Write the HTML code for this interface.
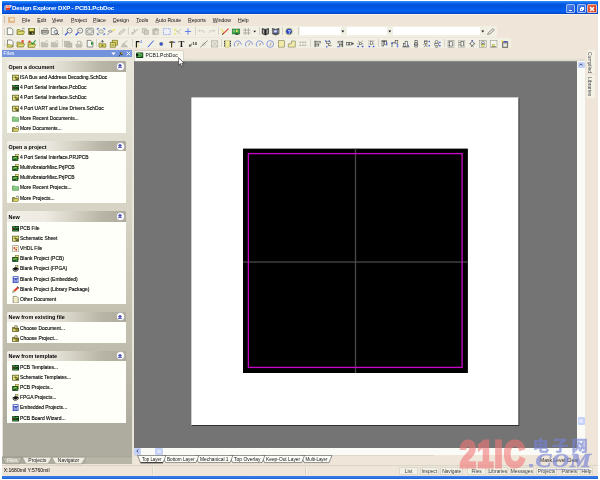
<!DOCTYPE html>
<html><head><meta charset="utf-8"><title>Design Explorer DXP - PCB1.PcbDoc</title>
<style>
*{box-sizing:border-box}
html,body{margin:0;padding:0}
body{width:600px;height:480px;background:#fff;overflow:hidden;position:relative;font-family:"Liberation Sans",sans-serif;font-size:5.1px;color:#000;line-height:1}
.a{position:absolute}
.t{position:absolute;white-space:nowrap;line-height:6px;height:6px}
#root{position:absolute;left:0;top:0;width:600px;height:480px;will-change:transform}
#win{left:2px;top:1px;width:596px;height:478px;background:#efe5d9}
#title{left:2px;top:1px;width:596px;height:13px;background:linear-gradient(#3a90fa 0,#1c7af4 9%,#0862ea 18%,#0052da 30%,#0056e2 48%,#0460ee 72%,#0458e6 88%,#0642c6 97%,#0a3ab4 100%)}
#title .t{color:#fff;font-weight:bold;font-size:6.15px;left:10px;top:3.7px;letter-spacing:-0.17px}
#menu{left:2px;top:14px;width:596px;height:11.5px;background:#efe5d9}
#menu .t{top:3.3px;font-size:5.1px;color:#111}
#menu u{text-decoration-color:rgba(0,0,0,0.32);text-underline-offset:0.3px}
.tb{background:#f2f0e4;border-radius:1px}
.sep{width:1px;background:#d6d2c5}
#panel{left:2px;top:57px;width:130px;height:407px;background:linear-gradient(#e9e6da,#dfddd0 20%,#d6d3c4 39%,#c6c2b2 62%,#bfbcad 72%,#aeac9e 90%,#aeac9e)}
#phead{left:2px;top:50px;width:130px;height:7.3px;background:#7292dc}
.sec{left:7px;width:119.3px;background:#fffffa}
.sh{left:7px;width:119.3px;height:10.5px;border-radius:1.5px 1.5px 0 0;background:linear-gradient(90deg,#f0eee6,#edebe2 32%,#d4d1c4 56%,#b8b5a6 80%,#aeab9c)}
.sh .t{left:1.5px;top:2.7px;font-weight:bold;font-size:5.45px;color:#000}
.chev{left:109.9px;top:1.7px;width:7px;height:7px;border-radius:50%;background:#fff;box-shadow:0 0 0 0.4px #c4c4d4}
.it{left:20px;font-size:4.94px;color:#000;-webkit-text-stroke:0.12px #000}
#canvas{left:134px;top:61px;width:443px;height:386.5px;background:#747474}
#sheet{left:191px;top:97px;width:327.5px;height:328px;background:#fff;box-shadow:0.8px 0.8px 0 #2a2a2a}
#board{left:243px;top:148px;width:225px;height:225px;background:#000}
#mag{left:248px;top:153px;width:215px;height:215px;border:1px solid #b414b4}
.sb{background:#c4d2fa;border-radius:1px}
.btn{top:467px;height:8px;background:#f3f1e6;border:0.5px solid #dcd8ca;text-align:center;font-size:4.85px;line-height:7px;color:#3a3a3a;white-space:nowrap}
.vt{position:absolute;left:587px;width:7.5px;background:#f4f2e6;border-radius:0 1px 1px 0}
.vt span{position:absolute;left:6.3px;top:1.5px;transform-origin:0 0;transform:rotate(90deg);white-space:nowrap;font-size:5px;line-height:6px;color:#4a4a4a}
.lt{position:absolute;top:456.5px;font-size:5px;line-height:6px;white-space:nowrap;color:#111}
</style></head>
<body>
<div id="root">
<div class="a" id="win"></div>
<div class="a" id="title"><span class="t">Design Explorer DXP - PCB1.PcbDoc</span>
<div class="a" style="left:2px;top:4px;width:2.2px;height:5.5px;background:#8a9fd0;border-radius:2px 0 0 2px"></div>
<div class="a" style="left:3.6px;top:3.7px;width:4.6px;height:5.8px;background:#e83a20"><span class="t" style="left:0.4px;top:0.6px;font-size:3px;line-height:4px;height:4px;color:#fff;font-weight:bold;letter-spacing:-0.2px">DXP</span></div>
<div class="a" style="left:564.3px;top:2.5px;width:8.8px;height:9.6px;border-radius:1.5px;border:0.6px solid rgba(255,255,255,0.55);background:linear-gradient(135deg,#4f88ee,#2558d4)"><div class="a" style="left:2px;top:5.3px;width:3px;height:1.4px;background:#fff"></div></div>
<div class="a" style="left:574.8px;top:2.5px;width:9px;height:9.6px;border-radius:1.5px;border:0.6px solid rgba(255,255,255,0.55);background:linear-gradient(135deg,#4f88ee,#2558d4)"><div class="a" style="left:3px;top:2px;width:3.6px;height:3.4px;border:0.7px solid #fff;border-top-width:1.1px"></div><div class="a" style="left:1.8px;top:3.6px;width:3.4px;height:3.2px;border:0.7px solid #fff;border-top-width:1.1px;background:#3a6fe0"></div></div>
<div class="a" style="left:585.4px;top:2.5px;width:9.4px;height:9.6px;border-radius:1.5px;border:0.6px solid rgba(255,255,255,0.6);background:linear-gradient(135deg,#e8684a,#cc3010)"><svg class="a" style="left:0;top:0" width="8.2" height="8.2" viewBox="0 0 8.2 8.2"><path d="M2.1 2.1L6.1 6.1M6.1 2.1L2.1 6.1" stroke="#fff" stroke-width="1.5"/></svg></div>
</div>
<div class="a" id="menu">
<div class="a" style="left:0;top:-0.3px;width:596px;height:0.8px;background:#fbf4e2"></div>
<div class="a" style="left:1.6px;top:2.3px;width:1px;height:7px;background:#c3bfb2"></div>
<div class="a" style="left:6.3px;top:2.5px;width:6.6px;height:6.2px;background:#e2b98a;border-radius:1px"><div class="a" style="left:1.3px;top:1.3px;width:4px;height:3.6px;background:#f1e2c6;border-radius:1px"></div></div>
<span class="t" style="left:20px"><u>F</u>ile</span>
<span class="t" style="left:35.3px"><u>E</u>dit</span>
<span class="t" style="left:50px"><u>V</u>iew</span>
<span class="t" style="left:69px"><u>P</u>roject</span>
<span class="t" style="left:91px"><u>P</u>lace</span>
<span class="t" style="left:111px"><u>D</u>esign</span>
<span class="t" style="left:134.3px"><u>T</u>ools</span>
<span class="t" style="left:153.5px"><u>A</u>uto Route</span>
<span class="t" style="left:186px"><u>R</u>eports</span>
<span class="t" style="left:210.7px"><u>W</u>indow</span>
<span class="t" style="left:236px"><u>H</u>elp</span>
</div>
<div class="a tb" style="left:2.5px;top:26px;width:494.5px;height:10.5px"></div>
<div class="a tb" style="left:2.5px;top:37.7px;width:508px;height:10.6px"></div>
<div class="a" style="left:3.5px;top:27.5px;width:1px;height:7.5px;background:#d6d2c4"></div>
<div class="a" style="left:3.5px;top:39.5px;width:1px;height:7.5px;background:#d6d2c4"></div>
<div class="a sep" style="left:38.5px;top:27.3px;height:8px"></div>
<div class="a sep" style="left:61.5px;top:27.3px;height:8px"></div>
<div class="a sep" style="left:128.2px;top:27.3px;height:8px"></div>
<div class="a sep" style="left:194.8px;top:27.3px;height:8px"></div>
<div class="a sep" style="left:218.0px;top:27.3px;height:8px"></div>
<div class="a sep" style="left:258.9px;top:27.3px;height:8px"></div>
<div class="a sep" style="left:282.2px;top:27.3px;height:8px"></div>
<div class="a sep" style="left:297.5px;top:27.3px;height:8px"></div>
<div class="a sep" style="left:38.5px;top:39.3px;height:8px"></div>
<div class="a sep" style="left:61.5px;top:39.3px;height:8px"></div>
<div class="a sep" style="left:95.5px;top:39.3px;height:8px"></div>
<div class="a sep" style="left:132.0px;top:39.3px;height:8px"></div>
<div class="a sep" style="left:220.5px;top:39.3px;height:8px"></div>
<div class="a sep" style="left:310.1px;top:39.3px;height:8px"></div>
<div class="a sep" style="left:377.5px;top:39.3px;height:8px"></div>
<div class="a sep" style="left:443.9px;top:39.3px;height:8px"></div>
<div class="a" style="left:300px;top:27.3px;width:40.800000000000026px;height:7.8px;background:#fff"></div>
<div class="a" style="left:340.8px;top:27.3px;width:4.8px;height:7.8px;background:#f1eee2"></div>
<svg class="a" style="left:341.40000000000003px;top:29.8px" width="3.6" height="3" viewBox="0 0 3.6 3"><path d="M0.3 0.5H3.3L1.8 2.4Z" fill="#111"/></svg>
<div class="a" style="left:347px;top:27.3px;width:40.2px;height:7.8px;background:#fff"></div>
<div class="a" style="left:387.2px;top:27.3px;width:4.8px;height:7.8px;background:#f1eee2"></div>
<svg class="a" style="left:387.8px;top:29.8px" width="3.6" height="3" viewBox="0 0 3.6 3"><path d="M0.3 0.5H3.3L1.8 2.4Z" fill="#111"/></svg>
<div class="a" style="left:393px;top:27.3px;width:87.2px;height:7.8px;background:#fff"></div>
<div class="a" style="left:480.2px;top:27.3px;width:4.8px;height:7.8px;background:#f1eee2"></div>
<svg class="a" style="left:480.8px;top:29.8px" width="3.6" height="3" viewBox="0 0 3.6 3"><path d="M0.3 0.5H3.3L1.8 2.4Z" fill="#111"/></svg>
<svg class="a" style="left:0;top:0" width="600" height="52" viewBox="0 0 600 52"><path d="M7.3 28H11.1L12.899999999999999 29.8V34.6H7.3Z" fill="#fdfdf8" stroke="#444" stroke-width="0.6" /><path d="M17 29.6H19.6L20.3 30.4H23.4V34.4H17Z" fill="#d6cf63" stroke="#6f6d1e" stroke-width="0.6" /><path d="M18.2 31.6H24.8L23.4 34.4H17Z" fill="#e4de7c" stroke="#6f6d1e" stroke-width="0.5" /><path d="M22 28.8q1.6 -1.2 2.8 0.4" fill="none" stroke="#333" stroke-width="0.5" /><rect x="28.3" y="28" width="6.6" height="6.6" fill="#55551a" /><rect x="29.4" y="28.5" width="4.4" height="2.6" fill="#e6e070" /><rect x="29.8" y="32.1" width="3.4" height="2.5" fill="#2c2c10" /><rect x="31.8" y="32.6" width="1" height="1.6" fill="#d8d8c0" /><path d="M42.5 30.4L44 28.4H47.8L46.6 30.4Z" fill="#f2f2ea" stroke="#666" stroke-width="0.5" /><rect x="41.3" y="30.4" width="7.2" height="3" fill="#a9a79c" stroke="#555" stroke-width="0.5"/><rect x="42.4" y="33" width="5" height="1.4" fill="#dcdad0" stroke="#666" stroke-width="0.4"/><path d="M51.3 28H55.099999999999994L56.9 29.8V34.6H51.3Z" fill="#fdfdf8" stroke="#444" stroke-width="0.6" /><circle cx="55.8" cy="32" r="1.7" fill="#dfe8f8" stroke="#445" stroke-width="0.6"/><path d="M57 33.2L58.8 35" fill="none" stroke="#333" stroke-width="0.9" /><circle cx="69.60000000000001" cy="30.6" r="2.5" fill="#fbfbf6" stroke="#555" stroke-width="0.7"/><path d="M67.80000000000001 32.4L65.0 35.2" fill="none" stroke="#3554d8" stroke-width="1.3" /><path d="M68.60000000000001 30.6H70.60000000000001" fill="none" stroke="#666" stroke-width="0.5" /><circle cx="80.2" cy="30.6" r="2.5" fill="#fbfbf6" stroke="#555" stroke-width="0.7"/><path d="M78.4 32.4L75.6 35.2" fill="none" stroke="#3554d8" stroke-width="1.3" /><path d="M79.2 30.6H81.2" fill="none" stroke="#666" stroke-width="0.5" /><rect x="86" y="28.2" width="7.4" height="6.6" fill="#f6f6f0" stroke="#555" stroke-width="0.6" rx="1"/><path d="M87.2 30.2q2.5 -1.6 5 0v2.6q-2.5 1.4 -5 0Z" fill="#e6e6de" stroke="#666" stroke-width="0.5" /><path d="M97.3 30V28.4H99M103 28.4H104.7V30M104.7 33V34.6H103M99 34.6H97.3V33" fill="none" stroke="#3554d8" stroke-width="0.7" /><rect x="99" y="30" width="4" height="3" fill="#e8e8e0" stroke="#777" stroke-width="0.5"/><path d="M108 31.4q2.4 -2 4.4 0q-2 2.2 -4.4 0Z" fill="#e2e2da" stroke="#666" stroke-width="0.5" /><rect x="112.6" y="29" width="2.4" height="2" fill="#ece66c" /><path d="M108.6 33.4L107.6 34.8" fill="none" stroke="#555" stroke-width="0.7" /><path d="M118.4 34.4L119.4 32.6L123.8 28.6L125.4 30L121 34Z" fill="#dddbd0" stroke="#b3b0a4" stroke-width="0.6" /><path d="M131.6 33.6L138.2 29.2M134 29L135.2 32.6" fill="none" stroke="#b3b0a4" stroke-width="0.8" /><circle cx="132.6" cy="33.4" r="1" fill="none" stroke="#b3b0a4" stroke-width="0.6"/><rect x="142.2" y="28.6" width="4" height="4.4" fill="#d9d6ca" stroke="#b3b0a4" stroke-width="0.6"/><rect x="144.4" y="30.2" width="4.2" height="4.4" fill="#d0cdc1" stroke="#b3b0a4" stroke-width="0.6"/><rect x="152.8" y="29" width="5.8" height="5.6" fill="#c4c1b5" stroke="#b3b0a4" stroke-width="0.6"/><rect x="154.4" y="28.2" width="2.6" height="1.6" fill="#b3b0a4" /><rect x="155" y="31" width="3.4" height="3.4" fill="#dddace" /><rect x="163.4" y="28.6" width="6.8" height="6" fill="#f0f1f8" stroke="#5872e0" stroke-width="0.6" stroke-dasharray="1.4 0.9"/><path d="M174.4 29.4L180.6 34.2M180.6 29.4L177.6 31.8" fill="none" stroke="#8a887c" stroke-width="0.7" stroke-dasharray="1.2 0.7"/><rect x="174.2" y="28.8" width="2.2" height="1.8" fill="#ece66c" /><rect x="174.4" y="33" width="1.8" height="1.6" fill="#ece66c" /><path d="M188 28.4V34.6M184.9 31.5H191.1" fill="none" stroke="#4668e6" stroke-width="0.8" /><path d="M198.6 30.8H203q1.6 0.2 1.4 2.2M198.6 30.8L199.8 29.7M198.6 30.8L199.8 31.9" fill="none" stroke="#c2bfb3" stroke-width="0.7" /><path d="M215 30.8H210.6q-1.6 0.2 -1.4 2.2M215 30.8L213.8 29.7M215 30.8L213.8 31.9" fill="none" stroke="#c2bfb3" stroke-width="0.7" /><path d="M221.4 28.6L224.2 33.6" fill="none" stroke="#e8e060" stroke-width="1.2" /><path d="M222.4 34.4L228.6 28.6" fill="none" stroke="#d8442c" stroke-width="1.2" /><path d="M222.2 34.8L223.4 33.4" fill="none" stroke="#333" stroke-width="0.8" /><rect x="232.2" y="29" width="7.6" height="5" fill="#3aa64a" stroke="#2a6a2c" stroke-width="0.5"/><rect x="236" y="29.8" width="1.6" height="2.2" fill="#e6e46c" /><rect x="233" y="30.2" width="2" height="1.4" fill="#8fd08a" /><rect x="235.4" y="33.4" width="3" height="1.4" fill="#333" /><path d="M245.2 28V35M248.4 28V35M243 30.2H250.6M243 33H250.6" fill="none" stroke="#98968c" stroke-width="0.7" /><path d="M253.4 30.8H256L254.7 32.4Z" fill="#111" /><path d="M262.2 28.4L265.4 29.4L268.6 28.4V33.8L265.4 35L262.2 33.8Z" fill="#4a4a4a" stroke="#222" stroke-width="0.6" /><path d="M263.6 29.8V33.6M267.2 29.8V33.6" fill="none" stroke="#d8d8d0" stroke-width="0.8" /><path d="M265.4 29.4V35" fill="none" stroke="#111" stroke-width="0.8" /><path d="M272.4 28.4L275.6 29.4L279 28.4V33.8L275.6 35L272.4 33.8Z" fill="#55555a" stroke="#222" stroke-width="0.6" /><rect x="274" y="30" width="3" height="2.8" fill="#e8ecfa" stroke="#3554d8" stroke-width="0.5"/><path d="M273 29.6V33.4M278.2 29.6V33.4" fill="none" stroke="#c8c8c4" stroke-width="0.6" /><circle cx="289" cy="31.5" r="3.4" fill="#2244c8" stroke="#e8d868" stroke-width="0.8"/><text x="287.7" y="33.5" font-size="5" font-weight="bold" fill="#fff" font-family="Liberation Sans, sans-serif">?</text><path d="M487.4 34.4L488.4 32.6L492.8 28.6L494.4 30L490 34Z" fill="#e2e0d6" stroke="#77756c" stroke-width="0.7" /><path d="M7.5 40.0H11.3L13.1 41.8V46.6H7.5Z" fill="#fdfdf8" stroke="#444" stroke-width="0.6" /><path d="M7 44.400000000000006H9.4L10 45.0H12.6V47.2H7Z" fill="#d6cf63" stroke="#6f6d1e" stroke-width="0.5" /><path d="M17 42.00000000000001H19.6L20.3 42.800000000000004H23.4V46.800000000000004H17Z" fill="#d6cf63" stroke="#6f6d1e" stroke-width="0.6" /><path d="M18.2 44.00000000000001H24.8L23.4 46.800000000000004H17Z" fill="#e4de7c" stroke="#6f6d1e" stroke-width="0.5" /><circle cx="22.6" cy="41.400000000000006" r="1.3" fill="#e8503c"/><path d="M28 42.400000000000006H30.6L31.3 43.2H34.4V47.2H28Z" fill="#d6cf63" stroke="#6f6d1e" stroke-width="0.6" /><path d="M29.2 44.400000000000006H35.8L34.4 47.2H28Z" fill="#e4de7c" stroke="#6f6d1e" stroke-width="0.5" /><circle cx="29.6" cy="41.6" r="1.2" fill="#e8503c"/><path d="M31 42.400000000000006L32.6 44.0L35.6 40.400000000000006" fill="none" stroke="#2f9a3a" stroke-width="1.1" /><path d="M41.3 42.400000000000006H43.9L44.599999999999994 43.2H47.699999999999996V47.0H41.3Z" fill="#c3c0b4" stroke="#b3b0a4" stroke-width="0.6" /><path d="M44.699999999999996 42.400000000000006L46.699999999999996 40.6L48.3 41.800000000000004" fill="none" stroke="#b3b0a4" stroke-width="0.8" /><path d="M51.3 42.400000000000006H53.9L54.599999999999994 43.2H57.699999999999996V47.0H51.3Z" fill="#c3c0b4" stroke="#b3b0a4" stroke-width="0.6" /><path d="M54.699999999999996 42.400000000000006L56.699999999999996 40.6L58.3 41.800000000000004" fill="none" stroke="#b3b0a4" stroke-width="0.8" /><rect x="64.4" y="41.2" width="5.4" height="5.6" fill="#c3c0b4" stroke="#b3b0a4" stroke-width="0.6"/><rect x="66.8" y="43.0" width="5.2" height="4.2" fill="#bcb9ad" stroke="#b3b0a4" stroke-width="0.6"/><path d="M75.6 44.6H82.4L81.4 47.2H76.4Z" fill="#c3c0b4" stroke="#b3b0a4" stroke-width="0.6" /><path d="M77.4 44.0V41.2H80.4V44.0" fill="none" stroke="#b3b0a4" stroke-width="0.8" /><path d="M80.4 41.800000000000004L82.6 43.2" fill="none" stroke="#b3b0a4" stroke-width="0.7" /><path d="M87.2 40.400000000000006H91.0L92.8 42.2V47.00000000000001H87.2Z" fill="#fdfdf8" stroke="#444" stroke-width="0.6" /><path d="M91 41.6L93.8 43.400000000000006L91 45.2Z" fill="#2f9a3a" /><path d="M99 43.2H101L101.6 43.800000000000004H105.8V47.2H99Z" fill="#d6cf63" stroke="#6f6d1e" stroke-width="0.6" /><path d="M102.4 42.800000000000004V40.400000000000006M101 41.800000000000004L102.4 40.400000000000006L103.8 41.800000000000004" fill="none" stroke="#333" stroke-width="0.7" /><circle cx="102.4" cy="45.400000000000006" r="1" fill="#6f6d1e"/><rect x="112.2" y="40.2" width="5.4" height="5" fill="#d6cf63" stroke="#6f6d1e" stroke-width="0.6"/><rect x="110.2" y="42.6" width="5.4" height="4.6" fill="#e4de7c" stroke="#6f6d1e" stroke-width="0.6"/><path d="M111.4 44.2H114.4M111.4 45.6H114.4" fill="none" stroke="#6f6d1e" stroke-width="0.5" /><path d="M121 47.0L123.6 42.800000000000004L127.6 47.0Z" fill="#c9c6ba" stroke="#b3b0a4" stroke-width="0.6" /><path d="M124.4 42.800000000000004L127.4 40.800000000000004" fill="none" stroke="#b3b0a4" stroke-width="0.9" /><path d="M136.4 47.400000000000006V41.6H139.4" fill="none" stroke="#111" stroke-width="1.1" /><path d="M138 47.2V43.2" fill="none" stroke="#e8e27a" stroke-width="0.8" /><text x="140.2" y="43.400000000000006" font-size="3.4" fill="#3554d8" font-family="Liberation Sans, sans-serif">4</text><path d="M147.8 47.2L153.6 40.6" fill="none" stroke="#3554d8" stroke-width="1" /><circle cx="161.2" cy="44.0" r="2.1" fill="#9a9a96"/><circle cx="161.2" cy="44.0" r="1.4" fill="#3450d4"/><path d="M171.6 47.400000000000006V42.2" fill="none" stroke="#4a3c14" stroke-width="1.1" /><path d="M169.4 42.2H173.4" fill="none" stroke="#4a3c14" stroke-width="1.3" /><path d="M173.2 42.2H175.2" fill="none" stroke="#2a3fc0" stroke-width="1" /><circle cx="171.6" cy="42.2" r="1.1" fill="#6a5a20"/><text x="178.6" y="47.2" font-size="8.8" font-weight="bold" fill="#222" font-family="Liberation Serif, serif">T</text><path d="M189.4 46.2L192.2 43.6M189.4 46.2L191.4 46.0M189.4 46.2L189.8 44.400000000000006" fill="none" stroke="#222" stroke-width="0.7" /><text x="192.4" y="44.6" font-size="4.2" font-weight="bold" fill="#222" font-family="Liberation Sans, sans-serif">10</text><path d="M200.4 47.2L207.6 40.6" fill="none" stroke="#4a4a4a" stroke-width="0.6" /><path d="M202.4 44.0L204.4 45.800000000000004M203.6 42.6L205.8 44.6" fill="none" stroke="#666" stroke-width="0.5" /><rect x="211.4" y="40.800000000000004" width="6.4" height="6.2" fill="#e9e7dd" stroke="#a9a79c" stroke-width="0.6"/><path d="M211.4 40.800000000000004L217.8 47.0M217.8 40.800000000000004L211.4 47.0" fill="none" stroke="#a9a79c" stroke-width="0.5" /><rect x="225.4" y="40.6" width="4" height="6.6" fill="#f0eaa0" stroke="#b8b060" stroke-width="0.4"/><path d="M224.6 40.800000000000004V47.0M230.4 40.800000000000004V47.0" fill="none" stroke="#222" stroke-width="1" stroke-dasharray="1.2 0.7"/><path d="M235.0 46.6A3.5 3.5 0 1 1 241.2 44.800000000000004" fill="none" stroke="#4a60dc" stroke-width="0.6" /><path d="M237.79999999999998 44.0L239.4 42.800000000000004M237.79999999999998 44.0V45.800000000000004" fill="none" stroke="#555" stroke-width="0.5" /><path d="M246.20000000000002 46.6A3.5 3.5 0 1 1 252.4 44.800000000000004" fill="none" stroke="#4a60dc" stroke-width="0.6" /><path d="M249.0 44.0L250.60000000000002 42.800000000000004M249.0 44.0V45.800000000000004" fill="none" stroke="#555" stroke-width="0.5" /><path d="M257.0 46.6A3.5 3.5 0 1 1 263.2 44.800000000000004" fill="none" stroke="#4a60dc" stroke-width="0.6" /><path d="M259.8 44.0L261.4 42.800000000000004M259.8 44.0V45.800000000000004" fill="none" stroke="#555" stroke-width="0.5" /><circle cx="270.2" cy="44.0" r="3.4" fill="none" stroke="#4a60dc" stroke-width="0.6"/><path d="M270.2 44.0L271.8 42.800000000000004M270.2 44.0V45.800000000000004" fill="none" stroke="#555" stroke-width="0.5" /><rect x="278.3" y="40.7" width="6.4" height="6.4" fill="#f1ebaa" stroke="#7c7a52" stroke-width="0.6"/><path d="M288.3 47.1V43.800000000000004H291.4V41.0H295.3V47.1Z" fill="#f1ebaa" stroke="#7c7a52" stroke-width="0.6" /><rect x="299.5" y="41.6" width="1.7" height="1.5" fill="#b4b2a6" /><rect x="299.5" y="44.6" width="1.7" height="1.5" fill="#b4b2a6" /><rect x="302.0" y="41.6" width="1.7" height="1.5" fill="#b4b2a6" /><rect x="302.0" y="44.6" width="1.7" height="1.5" fill="#b4b2a6" /><rect x="304.5" y="41.6" width="1.7" height="1.5" fill="#b4b2a6" /><rect x="304.5" y="44.6" width="1.7" height="1.5" fill="#b4b2a6" /><path d="M315.0 40.6V47.2" fill="none" stroke="#2a2a2a" stroke-width="0.7" /><rect x="315.79999999999995" y="41.2" width="4.4" height="1.8" fill="#f6f6f0" stroke="#2a2a2a" stroke-width="0.5"/><rect x="315.79999999999995" y="44.2" width="3" height="1.8" fill="#f6f6f0" stroke="#2a2a2a" stroke-width="0.5"/><rect x="325.0" y="40.400000000000006" width="1.4" height="1.2" fill="#3554d8" /><rect x="328.6" y="40.400000000000006" width="1.4" height="1.2" fill="#3554d8" /><rect x="326.20000000000005" y="41.800000000000004" width="4.4" height="1.8" fill="#f6f6f0" stroke="#2a2a2a" stroke-width="0.5"/><path d="M328.40000000000003 43.6V45.6H331.40000000000003" fill="none" stroke="#2a2a2a" stroke-width="0.6" /><rect x="326.0" y="46.2" width="1.4" height="1.2" fill="#3554d8" /><path d="M342.6 40.6V47.2" fill="none" stroke="#2a2a2a" stroke-width="0.7" /><rect x="338" y="41.2" width="4" height="1.8" fill="#f6f6f0" stroke="#2a2a2a" stroke-width="0.5"/><rect x="339.4" y="44.2" width="2.6" height="1.8" fill="#f6f6f0" stroke="#2a2a2a" stroke-width="0.5"/><rect x="337" y="46.400000000000006" width="2.6" height="0.8" fill="#3554d8" /><rect x="346.59999999999997" y="42.6" width="2.2" height="2.4" fill="#f6f6f0" stroke="#2a2a2a" stroke-width="0.5"/><rect x="349.4" y="42.6" width="2" height="2.4" fill="#f6f6f0" stroke="#2a2a2a" stroke-width="0.5"/><rect x="352.0" y="43.0" width="1.6" height="1.6" fill="#f6f6f0" stroke="#2a2a2a" stroke-width="0.5"/><path d="M358 40.800000000000004L360.4 42.6L362.8 40.800000000000004M357.4 43.800000000000004H363.4" fill="none" stroke="#2a2a2a" stroke-width="0.5" stroke-dasharray="1 0.6"/><rect x="357.4" y="45.800000000000004" width="1.6" height="1.4" fill="#3554d8" /><rect x="361.8" y="45.800000000000004" width="1.6" height="1.4" fill="#3554d8" /><rect x="359.4" y="42.800000000000004" width="2" height="2" fill="#f6f6f0" stroke="#2a2a2a" stroke-width="0.4"/><path d="M368.4 41.0H374.6M368.4 43.800000000000004H374.6" fill="none" stroke="#2a2a2a" stroke-width="0.5" stroke-dasharray="1 0.6"/><rect x="368.6" y="45.800000000000004" width="1.6" height="1.4" fill="#3554d8" /><rect x="372.8" y="45.800000000000004" width="1.6" height="1.4" fill="#3554d8" /><rect x="370.4" y="41.800000000000004" width="2" height="2.4" fill="#f6f6f0" stroke="#2a2a2a" stroke-width="0.4"/><path d="M381.4 40.800000000000004H387" fill="none" stroke="#2a2a2a" stroke-width="0.7" /><rect x="382" y="41.400000000000006" width="1.8" height="4.6" fill="#f6f6f0" stroke="#2a2a2a" stroke-width="0.5"/><rect x="384.6" y="41.400000000000006" width="1.8" height="3.2" fill="#f6f6f0" stroke="#2a2a2a" stroke-width="0.5"/><rect x="386.4" y="42.2" width="0.9" height="3.4" fill="#3554d8" /><path d="M392.0 47.2V42.800000000000004H395.2V41.2" fill="none" stroke="#2a2a2a" stroke-width="0.6" /><rect x="395.2" y="40.400000000000006" width="2.6" height="2.8" fill="#f6f6f0" stroke="#2a2a2a" stroke-width="0.5"/><rect x="391.2" y="42.400000000000006" width="1.6" height="1.4" fill="#3554d8" /><rect x="396.8" y="44.2" width="1.4" height="1.4" fill="#3554d8" /><rect x="396.8" y="46.2" width="1.4" height="1" fill="#3554d8" /><path d="M402.5 46.800000000000004H409.3" fill="none" stroke="#2a2a2a" stroke-width="0.8" /><rect x="403.3" y="43.6" width="2.2" height="3" fill="#f6f6f0" stroke="#2a2a2a" stroke-width="0.5"/><rect x="405.1" y="41.2" width="2.4" height="5.4" fill="#f6f6f0" stroke="#2a2a2a" stroke-width="0.5"/><rect x="407.5" y="44.800000000000004" width="1.4" height="1" fill="#3554d8" /><rect x="415.0" y="40.6" width="2.2" height="1.8" fill="#f6f6f0" stroke="#2a2a2a" stroke-width="0.5"/><rect x="414.40000000000003" y="43.0" width="3.4" height="1.8" fill="#f6f6f0" stroke="#2a2a2a" stroke-width="0.5"/><rect x="414.8" y="45.400000000000006" width="2.6" height="1.6" fill="#f6f6f0" stroke="#2a2a2a" stroke-width="0.5"/><path d="M424 40.800000000000004H427.6" fill="none" stroke="#2a2a2a" stroke-width="0.5" /><rect x="424.6" y="41.6" width="2.4" height="2" fill="#f6f6f0" stroke="#2a2a2a" stroke-width="0.5"/><path d="M423.4 44.6H428" fill="none" stroke="#2a2a2a" stroke-width="0.5" stroke-dasharray="1 0.6"/><path d="M424.2 47.2L425.8 45.2L427.4 47.2" fill="none" stroke="#2a2a2a" stroke-width="0.5" /><rect x="428.6" y="40.800000000000004" width="1.3" height="1.4" fill="#3554d8" /><rect x="428.6" y="45.0" width="1.3" height="1.4" fill="#3554d8" /><circle cx="436.6" cy="41.800000000000004" r="1.4" fill="#f6f6f0" stroke="#2a2a2a" stroke-width="0.5"/><rect x="434.8" y="43.400000000000006" width="3.6" height="2" fill="#f6f6f0" stroke="#2a2a2a" stroke-width="0.5"/><path d="M435 46.800000000000004q1.6 1 3.2 0" fill="none" stroke="#2a2a2a" stroke-width="0.6" /><rect x="439.2" y="41.800000000000004" width="1.3" height="1.4" fill="#3554d8" /><rect x="439.2" y="45.0" width="1.3" height="1.4" fill="#3554d8" /><rect x="448.0" y="40.6" width="6" height="6.6" fill="#ecebe2" stroke="#8a887c" stroke-width="0.5"/><rect x="449.6" y="41.800000000000004" width="2.8" height="4.2" fill="#f8f8f2" stroke="#2a2a2a" stroke-width="0.5"/><path d="M448.20000000000005 42.2H449.6M448.20000000000005 45.2H449.6" fill="none" stroke="#3a3a3a" stroke-width="0.5" /><rect x="458.4" y="40.6" width="6.4" height="6.6" fill="#ecebe2" stroke="#a9a79c" stroke-width="0.5"/><rect x="461" y="41.6" width="2.4" height="4.4" fill="#f8f8f2" stroke="#2a2a2a" stroke-width="0.5"/><path d="M458.6 42.6H461M458.6 45.0H461" fill="none" stroke="#3a3a3a" stroke-width="0.5" /><circle cx="472.2" cy="43.6" r="1.8" fill="#f8f8f2" stroke="#3a3a3a" stroke-width="0.6"/><path d="M472.2 40.2V41.800000000000004M469.4 43.6H470.4M474.0 43.6H475.2M471.0 47.2L472.2 45.400000000000006L473.4 47.2" fill="none" stroke="#3a3a3a" stroke-width="0.6" /><rect x="471.59999999999997" y="40.0" width="1.2" height="1" fill="#3554d8" /><rect x="479.59999999999997" y="40.400000000000006" width="6.6" height="7" fill="#ecebe2" stroke="#8a887c" stroke-width="0.5"/><circle cx="482.9" cy="42.400000000000006" r="1.3" fill="#f8f8f2" stroke="#3a3a3a" stroke-width="0.5"/><rect x="481.59999999999997" y="44.6" width="2.6" height="1.8" fill="#ece66c" stroke="#8a8420" stroke-width="0.3"/><path d="M480.79999999999995 44.0H485.0" fill="none" stroke="#3a3a3a" stroke-width="0.5" /><rect x="490.2" y="40.400000000000006" width="6.8" height="7" fill="#f4f3ec" stroke="#8a887c" stroke-width="0.5"/><rect x="492.4" y="44.400000000000006" width="2.4" height="2" fill="#ece66c" stroke="#8a8420" stroke-width="0.3"/><path d="M491.2 46.6H496" fill="none" stroke="#3a3a3a" stroke-width="0.5" /><rect x="502.4" y="41.800000000000004" width="5.4" height="5.6" fill="#a6a49a" stroke="#444" stroke-width="0.6"/><rect x="503.4" y="43.6" width="3.4" height="3" fill="#e8e7de" /><rect x="503.6" y="41.2" width="3.6" height="1.2" fill="#3a4cc0" /><circle cx="502.2" cy="41.2" r="1" fill="#ecd84c"/></svg>
<div class="a" id="panel"></div>
<div class="a" style="left:2px;top:57px;width:1.3px;height:400px;background:#e6e3d6"></div>
<div class="a" id="phead"><span class="t" style="left:1.5px;top:1px;color:#e6edff;font-weight:bold;font-size:4.85px">Files</span>
<svg class="a" style="left:109px;top:2.2px" width="5" height="4" viewBox="0 0 5 4"><path d="M0.3 0.5H4.7L2.5 3.2Z" fill="#fff"/></svg>
<svg class="a" style="left:115.5px;top:0.5px" width="6" height="6.5" viewBox="0 0 6 6.5"><path d="M3.2 0.8L5.2 2.8L3.6 4.4L1.6 2.4Z" fill="#3a3a20"/><path d="M3.6 1.2L4.8 2.4L4 3.2L2.8 2Z" fill="#e8d860"/><path d="M2.2 3.8L0.8 5.4" stroke="#222" stroke-width="0.8"/></svg>
<svg class="a" style="left:123.6px;top:1.2px" width="5" height="5" viewBox="0 0 5 5"><path d="M0.7 0.7L4.3 4.3M4.3 0.7L0.7 4.3" stroke="#fff" stroke-width="1"/></svg>
</div>
<div class="a sh" style="top:61.3px"><span class="t">Open a document</span><div class="a chev"><svg class="a" style="left:1.5px;top:1.3px" width="4" height="4.4" viewBox="0 0 4 4.4"><path d="M0.5 2L2 0.6L3.5 2M0.5 4L2 2.6L3.5 4" stroke="#2c2ca6" stroke-width="1.05" fill="none"/></svg></div></div>
<div class="a sec" style="top:71.7px;height:61.7px"></div>
<svg class="a" style="left:11.5px;top:73.6px" width="7.6" height="7.4" viewBox="0 0 7.6 7.4"><rect x="0.2" y="0.8" width="7" height="5.8" fill="#4c4c18"/><rect x="0.9" y="1.5" width="5.6" height="4.4" fill="#e9e582"/><rect x="3.6" y="3.6" width="2.9" height="2.3" fill="#3a3a14"/><path d="M1.6 3.4H4.6M3.6 2.2V3.6" stroke="#55551c" stroke-width="0.7"/><rect x="4.3" y="4.3" width="1.3" height="0.9" fill="#d8d470"/></svg>
<span class="t it" style="top:74.5px">ISA Bus and Address Decoding.SchDoc</span>
<svg class="a" style="left:11.5px;top:84.1px" width="7.6" height="7.4" viewBox="0 0 7.6 7.4"><rect x="0.2" y="1" width="7" height="5.4" fill="#0c140c"/><rect x="0.6" y="1.3" width="2.6" height="1.6" fill="#2f9a38"/><rect x="0.6" y="4.6" width="5.6" height="1.5" fill="#2a8a32"/><rect x="4.2" y="1.4" width="2.6" height="2" fill="#1f6a28"/><path d="M2.4 3.8L4 2.6H5.6" stroke="#9ad890" stroke-width="0.6" fill="none"/><rect x="0.2" y="2.9" width="1.2" height="1.7" fill="#c8402c" opacity="0.7"/></svg>
<span class="t it" style="top:85.0px">4 Port Serial Interface.PcbDoc</span>
<svg class="a" style="left:11.5px;top:94.1px" width="7.6" height="7.4" viewBox="0 0 7.6 7.4"><rect x="0.2" y="0.8" width="7" height="5.8" fill="#4c4c18"/><rect x="0.9" y="1.5" width="5.6" height="4.4" fill="#e9e582"/><rect x="3.6" y="3.6" width="2.9" height="2.3" fill="#3a3a14"/><path d="M1.6 3.4H4.6M3.6 2.2V3.6" stroke="#55551c" stroke-width="0.7"/><rect x="4.3" y="4.3" width="1.3" height="0.9" fill="#d8d470"/></svg>
<span class="t it" style="top:95.0px">4 Port Serial Interface.SchDoc</span>
<svg class="a" style="left:11.5px;top:104.6px" width="7.6" height="7.4" viewBox="0 0 7.6 7.4"><rect x="0.2" y="0.8" width="7" height="5.8" fill="#4c4c18"/><rect x="0.9" y="1.5" width="5.6" height="4.4" fill="#e9e582"/><rect x="3.6" y="3.6" width="2.9" height="2.3" fill="#3a3a14"/><path d="M1.6 3.4H4.6M3.6 2.2V3.6" stroke="#55551c" stroke-width="0.7"/><rect x="4.3" y="4.3" width="1.3" height="0.9" fill="#d8d470"/></svg>
<span class="t it" style="top:105.5px">4 Port UART and Line Drivers.SchDoc</span>
<svg class="a" style="left:11.5px;top:114.6px" width="7.6" height="7.4" viewBox="0 0 7.6 7.4"><path d="M0.5 1.9H2.8L3.4 2.7H6.7V6.3H0.5Z" fill="#86c884" stroke="#3f8f43" stroke-width="0.6"/><path d="M1 3.3H6.2" stroke="#a8dca6" stroke-width="0.6"/></svg>
<span class="t it" style="top:115.5px">More Recent Documents...</span>
<svg class="a" style="left:11.5px;top:125.1px" width="7.6" height="7.4" viewBox="0 0 7.6 7.4"><path d="M0.4 2H2.4L3 2.7H5.4V3.4H0.4Z" fill="#7a7424"/><path d="M0.4 3V6.6H5.8L7.2 3.6H2L0.4 6.6Z" fill="#d9d162" stroke="#5e5a1c" stroke-width="0.55"/><path d="M4.2 1.6q1.6 -1.2 2.6 0.4" stroke="#222" stroke-width="0.6" fill="none"/><path d="M6.2 2.4L7.2 1.8L6.8 3Z" fill="#222"/></svg>
<span class="t it" style="top:126.0px">More Documents...</span>
<div class="a sh" style="top:141px"><span class="t">Open a project</span><div class="a chev"><svg class="a" style="left:1.5px;top:1.3px" width="4" height="4.4" viewBox="0 0 4 4.4"><path d="M0.5 2L2 0.6L3.5 2M0.5 4L2 2.6L3.5 4" stroke="#2c2ca6" stroke-width="1.05" fill="none"/></svg></div></div>
<div class="a sec" style="top:151.2px;height:51.5px"></div>
<svg class="a" style="left:11.5px;top:154.0px" width="7.6" height="7.4" viewBox="0 0 7.6 7.4"><rect x="3.2" y="0.2" width="3.8" height="4.6" fill="#efe88a" stroke="#5a5620" stroke-width="0.5"/><rect x="0.2" y="2" width="6" height="4.8" fill="#12240f"/><rect x="0.8" y="2.6" width="4.8" height="3.6" fill="#2f9236"/><path d="M1.3 5L2.8 3.6H4.6" stroke="#e8e060" stroke-width="0.7" fill="none"/><rect x="1" y="5.2" width="3" height="1" fill="#154a18"/></svg>
<span class="t it" style="top:154.9px">4 Port Serial Interface.PRJPCB</span>
<svg class="a" style="left:11.5px;top:163.79999999999998px" width="7.6" height="7.4" viewBox="0 0 7.6 7.4"><rect x="3.2" y="0.2" width="3.8" height="4.6" fill="#efe88a" stroke="#5a5620" stroke-width="0.5"/><rect x="0.2" y="2" width="6" height="4.8" fill="#12240f"/><rect x="0.8" y="2.6" width="4.8" height="3.6" fill="#2f9236"/><path d="M1.3 5L2.8 3.6H4.6" stroke="#e8e060" stroke-width="0.7" fill="none"/><rect x="1" y="5.2" width="3" height="1" fill="#154a18"/></svg>
<span class="t it" style="top:164.7px">MultivibratorMisc.PrjPCB</span>
<svg class="a" style="left:11.5px;top:174.0px" width="7.6" height="7.4" viewBox="0 0 7.6 7.4"><rect x="3.2" y="0.2" width="3.8" height="4.6" fill="#efe88a" stroke="#5a5620" stroke-width="0.5"/><rect x="0.2" y="2" width="6" height="4.8" fill="#12240f"/><rect x="0.8" y="2.6" width="4.8" height="3.6" fill="#2f9236"/><path d="M1.3 5L2.8 3.6H4.6" stroke="#e8e060" stroke-width="0.7" fill="none"/><rect x="1" y="5.2" width="3" height="1" fill="#154a18"/></svg>
<span class="t it" style="top:174.9px">MultivibratorMisc.PrjPCB</span>
<svg class="a" style="left:11.5px;top:184.0px" width="7.6" height="7.4" viewBox="0 0 7.6 7.4"><path d="M0.5 1.9H2.8L3.4 2.7H6.7V6.3H0.5Z" fill="#86c884" stroke="#3f8f43" stroke-width="0.6"/><path d="M1 3.3H6.2" stroke="#a8dca6" stroke-width="0.6"/></svg>
<span class="t it" style="top:184.9px">More Recent Projects...</span>
<svg class="a" style="left:11.5px;top:194.6px" width="7.6" height="7.4" viewBox="0 0 7.6 7.4"><path d="M0.4 2H2.4L3 2.7H5.4V3.4H0.4Z" fill="#7a7424"/><path d="M0.4 3V6.6H5.8L7.2 3.6H2L0.4 6.6Z" fill="#d9d162" stroke="#5e5a1c" stroke-width="0.55"/><path d="M4.2 1.6q1.6 -1.2 2.6 0.4" stroke="#222" stroke-width="0.6" fill="none"/><path d="M6.2 2.4L7.2 1.8L6.8 3Z" fill="#222"/></svg>
<span class="t it" style="top:195.5px">More Projects...</span>
<div class="a sh" style="top:211.2px"><span class="t">New</span><div class="a chev"><svg class="a" style="left:1.5px;top:1.3px" width="4" height="4.4" viewBox="0 0 4 4.4"><path d="M0.5 2L2 0.6L3.5 2M0.5 4L2 2.6L3.5 4" stroke="#2c2ca6" stroke-width="1.05" fill="none"/></svg></div></div>
<div class="a sec" style="top:221.6px;height:82.4px"></div>
<svg class="a" style="left:11.5px;top:224.6px" width="7.6" height="7.4" viewBox="0 0 7.6 7.4"><rect x="0.2" y="1" width="7" height="5.4" fill="#0c140c"/><rect x="0.6" y="1.3" width="2.6" height="1.6" fill="#2f9a38"/><rect x="0.6" y="4.6" width="5.6" height="1.5" fill="#2a8a32"/><rect x="4.2" y="1.4" width="2.6" height="2" fill="#1f6a28"/><path d="M2.4 3.8L4 2.6H5.6" stroke="#9ad890" stroke-width="0.6" fill="none"/><rect x="0.2" y="2.9" width="1.2" height="1.7" fill="#c8402c" opacity="0.7"/></svg>
<span class="t it" style="top:225.5px">PCB File</span>
<svg class="a" style="left:11.5px;top:234.6px" width="7.6" height="7.4" viewBox="0 0 7.6 7.4"><rect x="0.2" y="0.8" width="7" height="5.8" fill="#4c4c18"/><rect x="0.9" y="1.5" width="5.6" height="4.4" fill="#e9e582"/><rect x="3.6" y="3.6" width="2.9" height="2.3" fill="#3a3a14"/><path d="M1.6 3.4H4.6M3.6 2.2V3.6" stroke="#55551c" stroke-width="0.7"/><rect x="4.3" y="4.3" width="1.3" height="0.9" fill="#d8d470"/></svg>
<span class="t it" style="top:235.5px">Schematic Sheet</span>
<svg class="a" style="left:11.5px;top:244.6px" width="7.6" height="7.4" viewBox="0 0 7.6 7.4"><rect x="0.5" y="0.5" width="6.2" height="6.3" rx="0.8" fill="#fbfbf4" stroke="#77756a" stroke-width="0.6"/><circle cx="2.4" cy="3" r="1" fill="#d8402c"/><circle cx="4.6" cy="2.6" r="0.9" fill="#e8a83c"/><circle cx="4.2" cy="4.8" r="1" fill="#d8402c"/><circle cx="2.4" cy="5" r="0.7" fill="#ecd85c"/></svg>
<span class="t it" style="top:245.5px">VHDL File</span>
<svg class="a" style="left:11.5px;top:255.1px" width="7.6" height="7.4" viewBox="0 0 7.6 7.4"><rect x="3.2" y="0.2" width="3.8" height="4.6" fill="#efe88a" stroke="#5a5620" stroke-width="0.5"/><rect x="0.2" y="2" width="6" height="4.8" fill="#12240f"/><rect x="0.8" y="2.6" width="4.8" height="3.6" fill="#2f9236"/><path d="M1.3 5L2.8 3.6H4.6" stroke="#e8e060" stroke-width="0.7" fill="none"/><rect x="1" y="5.2" width="3" height="1" fill="#154a18"/></svg>
<span class="t it" style="top:256.0px">Blank Project (PCB)</span>
<svg class="a" style="left:11.5px;top:265.1px" width="7.6" height="7.4" viewBox="0 0 7.6 7.4"><path d="M0.3 3.8L3.8 1.8L7 3.4L3.4 5.8Z" fill="#111"/><path d="M0.6 4.8L3.4 6.8L6.8 4.4" stroke="#222" stroke-width="0.9" fill="none"/><rect x="3.6" y="0.3" width="2.4" height="2" fill="#e8e27a" stroke="#444" stroke-width="0.4"/></svg>
<span class="t it" style="top:266.0px">Blank Project (FPGA)</span>
<svg class="a" style="left:11.5px;top:275.6px" width="7.6" height="7.4" viewBox="0 0 7.6 7.4"><rect x="0.7" y="0.3" width="5.8" height="6.8" fill="#2a3eb4"/><rect x="1.5" y="1" width="4.2" height="1.2" fill="#e8ecff"/><path d="M2.2 3V6.4M3.9 3.8V6.4M5.3 3V6.4" stroke="#f0f2ff" stroke-width="0.8"/></svg>
<span class="t it" style="top:276.5px">Blank Project (Embedded)</span>
<svg class="a" style="left:11.5px;top:285.6px" width="7.6" height="7.4" viewBox="0 0 7.6 7.4"><path d="M0.4 6.6L1.4 4.2L3 5.6Z" fill="#ecd85c" stroke="#444" stroke-width="0.4"/><path d="M1.8 4L5.4 0.8L6.8 2.2L3.2 5.4Z" fill="#e03a24"/><path d="M5.2 0.6L7.2 2.4" stroke="#333" stroke-width="1"/></svg>
<span class="t it" style="top:286.5px">Blank Project (Library Package)</span>
<svg class="a" style="left:11.5px;top:296.1px" width="7.6" height="7.4" viewBox="0 0 7.6 7.4"><path d="M1.2 0.4H4.8L6.2 1.8V7H1.2Z" fill="#fbf7d4" stroke="#55523c" stroke-width="0.6"/><path d="M2.2 2.4H5.2M2.2 3.8H5.2M2.2 5.2H5.2" stroke="#d8d29c" stroke-width="0.5"/></svg>
<span class="t it" style="top:297.0px">Other Document</span>
<div class="a sh" style="top:311.6px"><span class="t">New from existing file</span><div class="a chev"><svg class="a" style="left:1.5px;top:1.3px" width="4" height="4.4" viewBox="0 0 4 4.4"><path d="M0.5 2L2 0.6L3.5 2M0.5 4L2 2.6L3.5 4" stroke="#2c2ca6" stroke-width="1.05" fill="none"/></svg></div></div>
<div class="a sec" style="top:321.6px;height:21.399999999999977px"></div>
<svg class="a" style="left:11.5px;top:324.6px" width="7.6" height="7.4" viewBox="0 0 7.6 7.4"><path d="M0.4 2.4H2.6L3.2 3.1H6.6V6.6H0.4Z" fill="#8c8628" stroke="#4a4614" stroke-width="0.6"/><rect x="2.6" y="0.5" width="2.8" height="2.8" fill="#55521a"/><rect x="3.3" y="1" width="1.3" height="2" fill="#f4f0d4"/><path d="M1 4.2H3.4V6H1Z" fill="#e2dc78"/><path d="M6.2 3.6H7.4M6.2 5H7.4" stroke="#333" stroke-width="0.6"/></svg>
<span class="t it" style="top:325.5px">Choose Document...</span>
<svg class="a" style="left:11.5px;top:334.6px" width="7.6" height="7.4" viewBox="0 0 7.6 7.4"><path d="M0.4 2.4H2.6L3.2 3.1H6.6V6.6H0.4Z" fill="#8c8628" stroke="#4a4614" stroke-width="0.6"/><rect x="2.6" y="0.5" width="2.8" height="2.8" fill="#55521a"/><rect x="3.3" y="1" width="1.3" height="2" fill="#f4f0d4"/><path d="M1 4.2H3.4V6H1Z" fill="#e2dc78"/><path d="M6.2 3.6H7.4M6.2 5H7.4" stroke="#333" stroke-width="0.6"/></svg>
<span class="t it" style="top:335.5px">Choose Project...</span>
<div class="a sh" style="top:350.7px"><span class="t">New from template</span><div class="a chev"><svg class="a" style="left:1.5px;top:1.3px" width="4" height="4.4" viewBox="0 0 4 4.4"><path d="M0.5 2L2 0.6L3.5 2M0.5 4L2 2.6L3.5 4" stroke="#2c2ca6" stroke-width="1.05" fill="none"/></svg></div></div>
<div class="a sec" style="top:360.8px;height:62.599999999999966px"></div>
<svg class="a" style="left:11.5px;top:363.6px" width="7.6" height="7.4" viewBox="0 0 7.6 7.4"><rect x="0.2" y="1" width="7" height="5.4" fill="#0c140c"/><rect x="0.6" y="1.3" width="2.6" height="1.6" fill="#2f9a38"/><rect x="0.6" y="4.6" width="5.6" height="1.5" fill="#2a8a32"/><rect x="4.2" y="1.4" width="2.6" height="2" fill="#1f6a28"/><path d="M2.4 3.8L4 2.6H5.6" stroke="#9ad890" stroke-width="0.6" fill="none"/><rect x="0.2" y="2.9" width="1.2" height="1.7" fill="#c8402c" opacity="0.7"/></svg>
<span class="t it" style="top:364.5px">PCB Templates...</span>
<svg class="a" style="left:11.5px;top:373.6px" width="7.6" height="7.4" viewBox="0 0 7.6 7.4"><rect x="0.2" y="0.8" width="7" height="5.8" fill="#4c4c18"/><rect x="0.9" y="1.5" width="5.6" height="4.4" fill="#e9e582"/><rect x="3.6" y="3.6" width="2.9" height="2.3" fill="#3a3a14"/><path d="M1.6 3.4H4.6M3.6 2.2V3.6" stroke="#55551c" stroke-width="0.7"/><rect x="4.3" y="4.3" width="1.3" height="0.9" fill="#d8d470"/></svg>
<span class="t it" style="top:374.5px">Schematic Templates...</span>
<svg class="a" style="left:11.5px;top:384.1px" width="7.6" height="7.4" viewBox="0 0 7.6 7.4"><rect x="3.2" y="0.2" width="3.8" height="4.6" fill="#efe88a" stroke="#5a5620" stroke-width="0.5"/><rect x="0.2" y="2" width="6" height="4.8" fill="#12240f"/><rect x="0.8" y="2.6" width="4.8" height="3.6" fill="#2f9236"/><path d="M1.3 5L2.8 3.6H4.6" stroke="#e8e060" stroke-width="0.7" fill="none"/><rect x="1" y="5.2" width="3" height="1" fill="#154a18"/></svg>
<span class="t it" style="top:385.0px">PCB Projects...</span>
<svg class="a" style="left:11.5px;top:394.1px" width="7.6" height="7.4" viewBox="0 0 7.6 7.4"><path d="M0.3 3.8L3.8 1.8L7 3.4L3.4 5.8Z" fill="#111"/><path d="M0.6 4.8L3.4 6.8L6.8 4.4" stroke="#222" stroke-width="0.9" fill="none"/><rect x="3.6" y="0.3" width="2.4" height="2" fill="#e8e27a" stroke="#444" stroke-width="0.4"/></svg>
<span class="t it" style="top:395.0px">FPGA Projects...</span>
<svg class="a" style="left:11.5px;top:404.1px" width="7.6" height="7.4" viewBox="0 0 7.6 7.4"><rect x="0.7" y="0.3" width="5.8" height="6.8" fill="#2a3eb4"/><rect x="1.5" y="1" width="4.2" height="1.2" fill="#e8ecff"/><path d="M2.2 3V6.4M3.9 3.8V6.4M5.3 3V6.4" stroke="#f0f2ff" stroke-width="0.8"/></svg>
<span class="t it" style="top:405.0px">Embedded Projects...</span>
<svg class="a" style="left:11.5px;top:414.6px" width="7.6" height="7.4" viewBox="0 0 7.6 7.4"><rect x="0.2" y="1" width="7" height="5.4" fill="#0c140c"/><rect x="0.6" y="1.3" width="2.6" height="1.6" fill="#2f9a38"/><rect x="0.6" y="4.6" width="5.6" height="1.5" fill="#2a8a32"/><rect x="4.2" y="1.4" width="2.6" height="2" fill="#1f6a28"/><path d="M2.4 3.8L4 2.6H5.6" stroke="#9ad890" stroke-width="0.6" fill="none"/><rect x="0.2" y="2.9" width="1.2" height="1.7" fill="#c8402c" opacity="0.7"/></svg>
<span class="t it" style="top:415.5px">PCB Board Wizard...</span>
<svg class="a" style="left:2px;top:456px" width="130" height="8.5" viewBox="0 0 130 8.5"><rect x="0" y="0.6" width="130" height="0.7" fill="#a3a192"/><rect x="84" y="1.3" width="46" height="6.6" fill="#b7b5a6"/><path d="M20.5 1.3L24 7.8H46L49.5 1.3Z" fill="#efede2" stroke="#8f8d7e" stroke-width="0.45"/><path d="M50 1.3L53.5 7.8H79.5L83.5 1.3Z" fill="#efede2" stroke="#8f8d7e" stroke-width="0.45"/><path d="M0.3 1.3L3.5 7.8H17L20.3 1.3Z" fill="#bfbdaf" stroke="#7c7a6c" stroke-width="0.45"/><text x="5" y="6.3" font-size="5" fill="#f8f8f2" font-family="Liberation Sans, sans-serif">Files</text><text x="26.3" y="6.3" font-size="5" fill="#222" font-family="Liberation Sans, sans-serif">Projects</text><text x="55.8" y="6.3" font-size="5" fill="#222" font-family="Liberation Sans, sans-serif">Navigator</text></svg>
<div class="a" style="left:132px;top:50px;width:2px;height:414px;background:#e9e5d8"></div>
<div class="a" style="left:134px;top:58px;width:451px;height:3px;background:linear-gradient(#ebe7dc,#d9d6ca)"></div>
<div class="a" style="left:133.5px;top:50px;width:50px;height:11px;background:#fbfaf2;border:0.6px solid #d8d5c8;border-bottom:0;border-radius:1.5px 1.5px 0 0"></div>
<svg class="a" style="left:136px;top:52px" width="7.5" height="6.5" viewBox="0 0 7.5 6.5"><rect x="0.2" y="0.4" width="7" height="5.6" rx="0.6" fill="#12300f"/><rect x="1" y="1" width="5.6" height="4.2" fill="#2c8a32"/><rect x="0.2" y="2" width="1.6" height="2" fill="#0a0a0a"/><path d="M2.4 1.8H4L5 3H6.2M2.4 4.2H4.4" stroke="#cfe8a8" stroke-width="0.55" fill="none"/></svg>
<span class="t" style="left:145.5px;top:52.4px;font-size:5.05px;color:#111">PCB1.PcbDoc</span>
<div class="a" id="canvas"></div>
<div class="a" style="left:134px;top:61px;width:443px;height:1.2px;background:linear-gradient(#9a9a98,#7c7c7c)"></div>
<svg class="a" style="left:185px;top:90px" width="340" height="340" viewBox="185 90 340 340"><rect x="190.9" y="97.6" width="1" height="327.6" fill="#5a5a5a"/><rect x="192.1" y="98.2" width="327.2" height="327.7" fill="#2c2c2c"/><rect x="191.3" y="97.4" width="327.1" height="327.6" fill="#fff"/><rect x="243" y="148.6" width="224.9" height="224.4" fill="#000"/><path d="M243 262H467.9" stroke="#2f2f2f" stroke-width="2"/><path d="M355.5 148.6V373" stroke="#4a4a4a" stroke-width="1.3"/><rect x="248.4" y="153.6" width="213.7" height="213.8" fill="none" stroke="#c408c4" stroke-width="1.35"/></svg>
<div class="a" style="left:577px;top:61px;width:8px;height:394px;background:#fafaf6"></div>
<div class="a sb" style="left:577.6px;top:61.6px;width:7px;height:6.8px"><svg class="a" style="left:1.6px;top:1.8px" width="4" height="3" viewBox="0 0 4 3"><path d="M0.5 2.4L2 0.8L3.5 2.4" stroke="#333c70" stroke-width="0.9" fill="none"/></svg></div>
<div class="a sb" style="left:577.8px;top:417px;width:6.8px;height:8px"><div class="a" style="left:1.6px;top:2.2px;width:3.6px;height:3.6px;background:#dfe6fd;border-radius:1px"></div></div>
<div class="vt" style="top:50.3px;height:23px"><span>Compiled</span></div>
<div class="vt" style="top:75.3px;height:22.5px"><span>Libraries</span></div>
<div class="a" style="left:134px;top:447.5px;width:443px;height:7.7px;background:#fafaf6"></div>
<div class="a sb" style="left:134.3px;top:448px;width:7px;height:6.8px"><svg class="a" style="left:2px;top:1.4px" width="3" height="4" viewBox="0 0 3 4"><path d="M2.4 0.5L0.8 2L2.4 3.5" stroke="#333c70" stroke-width="0.9" fill="none"/></svg></div>
<div class="a sb" style="left:154.6px;top:448px;width:8px;height:6.8px"><div class="a" style="left:2px;top:1.6px;width:4px;height:3.4px;background:#dfe6fd;border-radius:1px"></div></div>
<svg class="a" style="left:134px;top:455px" width="300" height="9" viewBox="134 455 300 9"><rect x="134" y="455" width="300" height="0.7" fill="#d8d5c8"/><path d="M301.1 455.4L304.1 462.6H329L332 455.4Z" fill="#fdfdf8" stroke="#3a3a3a" stroke-width="0.55"/><path d="M261.5 455.4L264.5 462.6H301.6L304.6 455.4Z" fill="#fdfdf8" stroke="#3a3a3a" stroke-width="0.55"/><path d="M229.5 455.4L232.5 462.6H262L265 455.4Z" fill="#fdfdf8" stroke="#3a3a3a" stroke-width="0.55"/><path d="M195.5 455.4L198.5 462.6H230L233 455.4Z" fill="#fdfdf8" stroke="#3a3a3a" stroke-width="0.55"/><path d="M162.5 455.4L165.5 462.6H196L199 455.4Z" fill="#fdfdf8" stroke="#3a3a3a" stroke-width="0.55"/><path d="M137.5 455.4L140.5 462.6H163L166 455.4Z" fill="#fdfdf8" stroke="#3a3a3a" stroke-width="0.55"/><path d="M140.5 462.8H163" stroke="#111" stroke-width="0.9"/><text x="142" y="461" font-size="5" fill="#111" font-family="Liberation Sans, sans-serif" textLength="19.5" lengthAdjust="spacingAndGlyphs">Top Layer</text><text x="167" y="461" font-size="5" fill="#111" font-family="Liberation Sans, sans-serif" textLength="27.5" lengthAdjust="spacingAndGlyphs">Bottom Layer</text><text x="200" y="461" font-size="5" fill="#111" font-family="Liberation Sans, sans-serif" textLength="28.5" lengthAdjust="spacingAndGlyphs">Mechanical 1</text><text x="234" y="461" font-size="5" fill="#111" font-family="Liberation Sans, sans-serif" textLength="26.5" lengthAdjust="spacingAndGlyphs">Top Overlay</text><text x="266" y="461" font-size="5" fill="#111" font-family="Liberation Sans, sans-serif" textLength="34.10000000000002" lengthAdjust="spacingAndGlyphs">Keep-Out Layer</text><text x="305.6" y="461" font-size="5" fill="#111" font-family="Liberation Sans, sans-serif" textLength="21.899999999999977" lengthAdjust="spacingAndGlyphs">Multi-Layer</text></svg>
<div class="a" style="left:2px;top:465.3px;width:596px;height:0.7px;background:#d9d5c7"></div>
<span class="t" style="left:3.7px;top:467.3px;font-size:5.05px">X:1680mil Y:5760mil</span>
<div class="a" style="left:152px;top:467px;width:1px;height:8px;background:#d5d1c3;box-shadow:0.6px 0 0 #fbfaf4"></div>
<div class="a" style="left:305px;top:467px;width:1px;height:8px;background:#d5d1c3;box-shadow:0.6px 0 0 #fbfaf4"></div>
<div class="a btn" style="left:399px;width:19px">List</div>
<div class="a btn" style="left:419.6px;width:19.399999999999977px">Inspect</div>
<div class="a btn" style="left:440.4px;width:22.600000000000023px">Navigate</div>
<div class="a btn" style="left:467px;width:19px">Files</div>
<div class="a btn" style="left:487.6px;width:20.399999999999977px">Libraries</div>
<div class="a btn" style="left:509.6px;width:24.399999999999977px">Messages</div>
<div class="a btn" style="left:536px;width:21px">Projects</div>
<div class="a btn" style="left:561px;width:17px">Panels</div>
<div class="a btn" style="left:580px;width:13px">Help</div>
<span class="t" style="left:540px;top:457.3px;font-size:5px;color:#222">Mask Level Clear</span>
<div class="a" style="left:2px;top:475.6px;width:596px;height:3px;background:linear-gradient(#3d7fe8,#2266dc)"></div>
<svg class="a" style="left:177.5px;top:56.5px" width="8" height="11" viewBox="0 0 8 11"><path d="M0.6 0.6V8.2L2.4 6.6L3.8 9.8L5.2 9.2L3.8 6.2H6.2Z" fill="#fff" stroke="#222" stroke-width="0.6"/></svg>
<span class="a" id="wm1" style="left:459.8px;top:436.8px;font-size:36px;line-height:36px;font-weight:bold;color:#f37777;-webkit-text-stroke:3.2px #f37777;opacity:0.58;transform-origin:0 0;transform:scaleX(0.8);letter-spacing:1.6px;white-space:nowrap">21IC</span>
<span class="a" id="wm2" style="left:532.5px;top:436.6px;font-size:16.5px;line-height:20px;-webkit-text-stroke:0.45px #7683d6;font-family:'Liberation Sans','Noto Sans CJK SC',sans-serif;font-weight:bold;color:#7683d6;opacity:0.66;white-space:nowrap;letter-spacing:3px;transform-origin:0 0;transform:scaleY(0.9)">电子网</span>
<span class="a" id="wm3" style="left:528.5px;top:451.3px;font-size:19.5px;line-height:20px;font-family:'Liberation Serif',serif;font-style:italic;font-weight:bold;color:#7683d6;opacity:0.66;white-space:nowrap;letter-spacing:0.5px;transform-origin:0 0;transform:scaleX(1.22);-webkit-text-stroke:0.5px #7683d6">.COM</span>
<div class="a" style="left:541px;top:469.3px;width:48px;height:0.8px;background:#7683d6;opacity:0.5"></div>
</div>
</body></html>
